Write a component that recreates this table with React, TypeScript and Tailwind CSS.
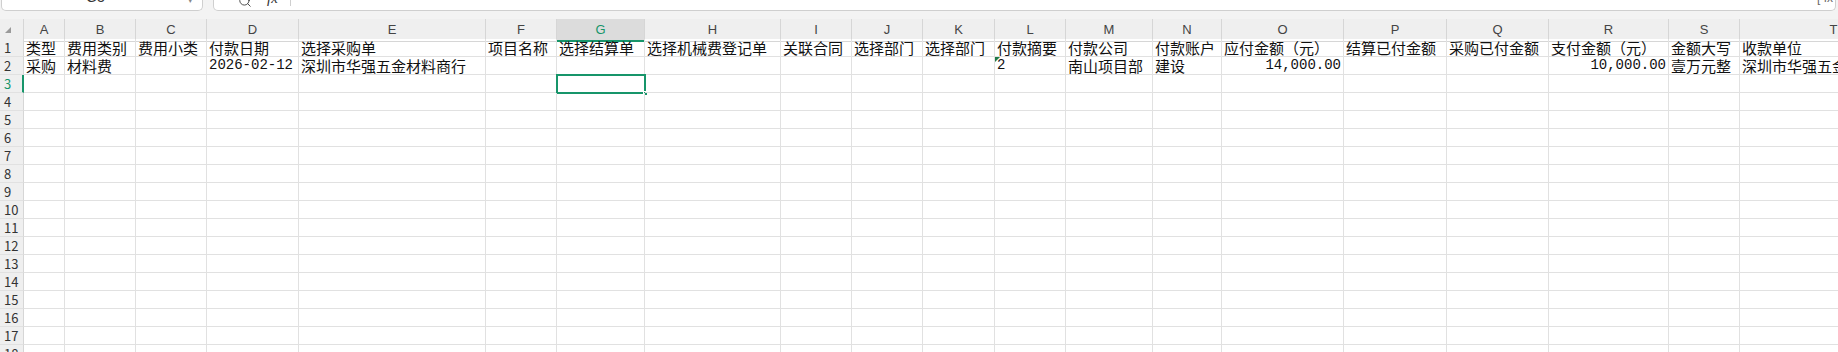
import { Search } from "lucide-react";

const GRID =
  "grid grid-cols-[24px_41px_71px_71px_92px_187px_71px_88px_136px_71px_71px_72px_71px_87px_69px_122px_103px_102px_120px_71px_188px]";

const letters = "ABCDEFGHIJKLMNOPQRST".split("");

const headRow = [
  "类型",
  "费用类别",
  "费用小类",
  "付款日期",
  "选择采购单",
  "项目名称",
  "选择结算单",
  "选择机械费登记单",
  "关联合同",
  "选择部门",
  "选择部门",
  "付款摘要",
  "付款公司",
  "付款账户",
  "应付金额（元）",
  "结算已付金额",
  "采购已付金额",
  "支付金额（元）",
  "金额大写",
  "收款单位",
];

const dataRow = [
  "采购",
  "材料费",
  "",
  "2026-02-12",
  "深圳市华强五金材料商行",
  "",
  "",
  "",
  "",
  "",
  "",
  "2",
  "南山项目部",
  "建设",
  "14,000.00",
  "",
  "",
  "10,000.00",
  "壹万元整",
  "深圳市华强五金材料商行",
];

function TopBar() {
  return (
    <div className="flex h-[19px] bg-[#f3f3f3]">
      <div className="ml-[1px] flex h-[11px] w-[202px] items-start overflow-hidden rounded-b-[5px] border border-t-0 border-[#cfcfcf] bg-white">
        <span className="-mt-[10px] ml-[84px] text-[14px] leading-[14px] text-[#333]">G3</span>
        <span className="-mt-[4px] ml-auto mr-[9px] text-[9px] leading-[9px] text-[#888]">▾</span>
      </div>
      <div className="ml-[10px] mr-[2px] flex h-[11px] flex-1 items-start overflow-hidden rounded-b-[5px] border border-t-0 border-[#cfcfcf] bg-white">
        <Search className="-mt-[6px] ml-[24px] text-[#444]" size={14} strokeWidth={1.6} />
        <span className="-mt-[9px] ml-[15px] font-['Liberation_Serif',serif] text-[15px] italic leading-[15px] text-[#333]">
          fx
        </span>
        <span className="ml-[12px] h-[6px] w-px bg-[#cfcfcf]" />
        <span className="-mt-[9px] ml-auto mr-[2px] font-['Liberation_Sans',sans-serif] text-[12px] leading-[15px] text-[#666]">
          [ fx
        </span>
      </div>
    </div>
  );
}

function ColumnHeader() {
  return (
    <div className={`${GRID} h-[20px] bg-[#efefef]`}>
      <div className="flex items-center border-b border-r border-[#d6d6d6] pl-[5px]">
        <svg width="6" height="6" viewBox="0 0 6 6">
          <polygon points="6,0 6,6 0,6" fill="#9a9a9a" />
        </svg>
      </div>
      {letters.map((l) =>
        l === "G" ? (
          <div
            key={l}
            className="flex items-center justify-center border-b-2 border-r border-b-[#17956a] border-r-[#d6d6d6] bg-[#dcdcdc] pt-[1px] text-[13px] text-[#17956a]"
          >
            {l}
          </div>
        ) : (
          <div
            key={l}
            className="flex items-center justify-center border-b border-r border-[#d6d6d6] text-[13px] text-[#444]"
          >
            {l}
          </div>
        )
      )}
    </div>
  );
}

function Cell({ value, col, row }: { value: string; col: number; row: number }) {
  const numeric = /^[\d,.\-]+$/.test(value);
  const right = numeric && value.includes(",");
  const selected = row === 3 && col === 6;
  const flag = row === 2 && col === 11;
  return (
    <div
      className={`relative h-[18px] whitespace-nowrap border-b border-r border-[#e1e1e1] px-[2px] leading-[17px] text-[#111] ${
        numeric
          ? "font-['Liberation_Mono',monospace] text-[14px]"
          : "text-[15px]"
      } ${right ? "text-right" : "text-left"}`}
    >
      <div className="overflow-hidden">{value}</div>
      {flag && (
        <svg className="absolute left-0 top-0" width="5" height="5" viewBox="0 0 5 5">
          <polygon points="0,0 5,0 0,5" fill="#1f7a47" />
        </svg>
      )}
      {selected && (
        <div className="absolute -left-[1px] -top-[1px] h-[20px] w-[90px] border-2 border-[#17956a]">
          <div className="absolute -bottom-[4px] -right-[4px] h-[5px] w-[5px] border border-white bg-[#17956a]" />
        </div>
      )}
    </div>
  );
}

function Row({ n, values }: { n: number; values: string[] }) {
  const active = n === 3;
  return (
    <div className={GRID}>
      <div
        className={`h-[18px] border-b border-[#e1e1e1] bg-[#efefef] pl-[4px] text-[13px] leading-[17px] ${
          active
            ? "border-r-2 border-r-[#17956a] text-[#17956a]"
            : "border-r border-r-[#d6d6d6] text-[#333]"
        }`}
      >
        {n}
      </div>
      {letters.map((_, i) => (
        <Cell key={i} value={values[i] ?? ""} col={i} row={n} />
      ))}
    </div>
  );
}

export default function App() {
  const rows = Array.from({ length: 18 }, (_, i) => i + 1);
  return (
    <div className="h-[352px] w-[1838px] overflow-hidden bg-white font-['Liberation_Sans','Noto_Sans_CJK_SC',sans-serif]">
      <TopBar />
      <ColumnHeader />
      <div className="font-['Noto_Sans_CJK_SC',sans-serif]">
        {rows.map((n) => (
          <Row
            key={n}
            n={n}
            values={n === 1 ? headRow : n === 2 ? dataRow : []}
          />
        ))}
      </div>
    </div>
  );
}
